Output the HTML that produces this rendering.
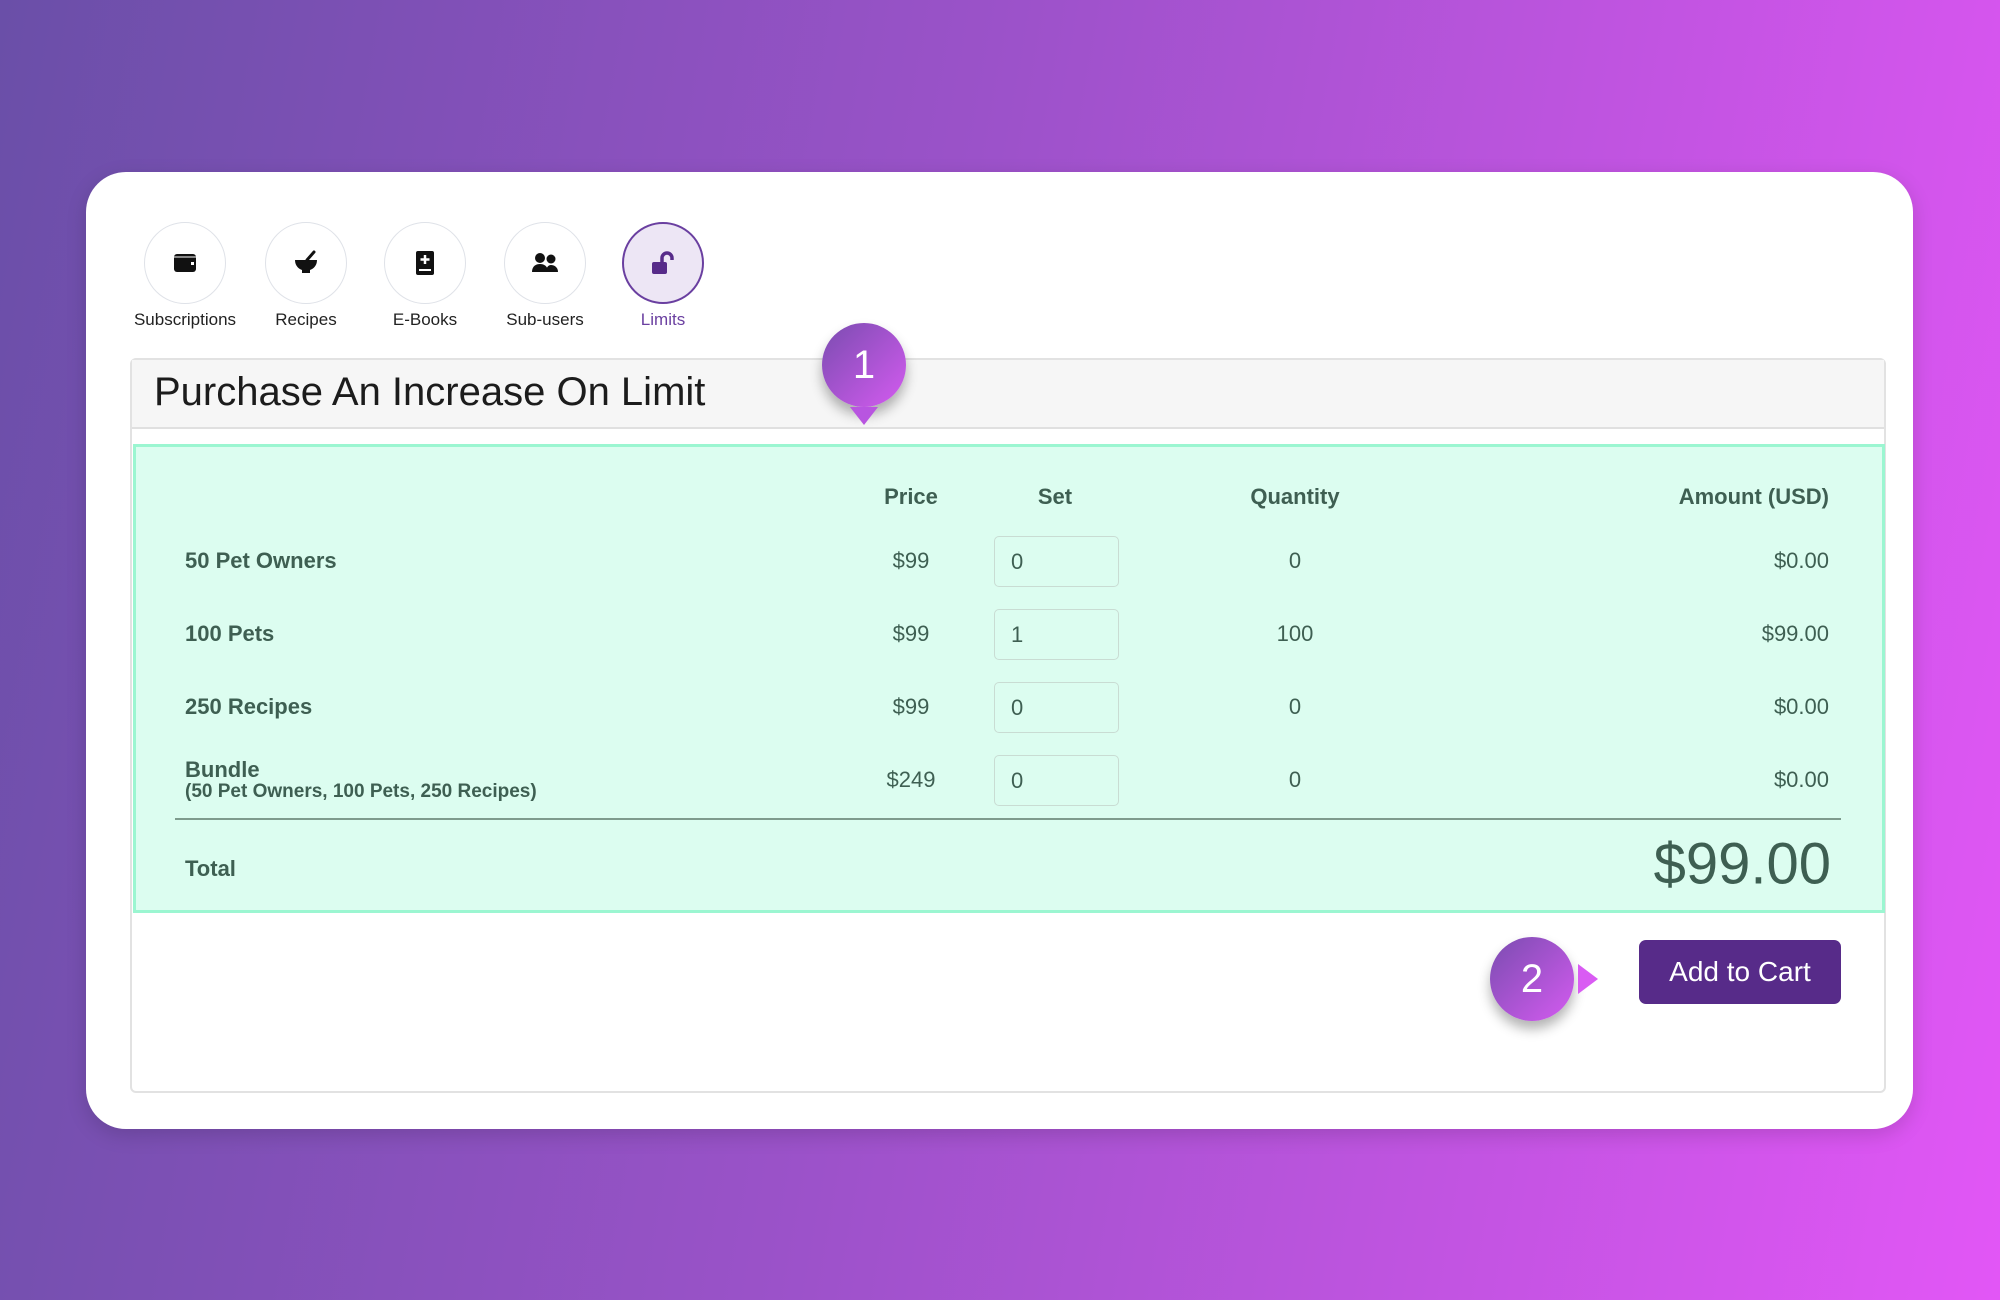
<!DOCTYPE html>
<html><head><meta charset="utf-8"><style>
*{margin:0;padding:0;box-sizing:border-box}
body{width:2000px;height:1300px;overflow:hidden;background:linear-gradient(100deg,#6a4fa8 0%,#9b52c9 45%,#e256f6 100%);font-family:"Liberation Sans",sans-serif;position:relative}
.card{position:absolute;left:86px;top:172px;width:1827px;height:957px;background:#fff;border-radius:40px;box-shadow:0 6px 20px rgba(0,0,0,.15)}
.ic{position:absolute;width:82px;height:82px;border-radius:50%;border:1.5px solid #dfe2e8;background:#fff;display:flex;align-items:center;justify-content:center}
.ic.act{background:#ede6f5;border:2px solid #6a3fa0}
.lbl{position:absolute;top:310px;font-size:17px;color:#222;width:140px;text-align:center}
.panel{position:absolute;left:130px;top:358px;width:1756px;height:735px;border:2px solid #e2e2e2;border-radius:6px;background:#fff}
.head{position:absolute;left:0;top:0;right:0;height:69px;background:#f6f6f6;border-bottom:2px solid #e0e0e0}
.head h1{position:absolute;left:22px;top:10px;font-size:40px;font-weight:normal;color:#1c1c1c}
.green{position:absolute;left:133px;top:444px;width:1752px;height:469px;background:#dcfdf0;border:3px solid #9bf6d1;color:#3e5f52}
.t{position:absolute;font-size:22px;transform:translateY(-50%);white-space:nowrap}
.b{font-weight:bold}
.c{transform:translate(-50%,-50%)}
.r{transform:translate(-100%,-50%)}
.inp{position:absolute;left:994px;width:125px;height:51px;border:1.5px solid #c9dcd3;border-radius:5px;background:#dcfdf0;font-size:22px;padding:12px 16px;color:#3e5f52}
.badge{position:absolute;width:84px;height:84px;border-radius:50%;background:linear-gradient(135deg,#7a4cb0,#d45bf0);color:#fff;font-size:40px;display:flex;align-items:center;justify-content:center;box-shadow:0 8px 12px rgba(0,0,0,.3)}
.btn{position:absolute;left:1639px;top:940px;width:202px;height:64px;background:#572b89;border-radius:7px;color:#fff;font-size:28px;display:flex;align-items:center;justify-content:center}
</style></head><body>
<div class="card"></div>
<div class="ic" style="left:144px;top:222px"><svg width="24" height="22" viewBox="0 0 24 22"><rect x="1" y="2" width="22" height="18" rx="3" fill="#111"/><rect x="1" y="4" width="22" height="2" fill="#fff" opacity=".5"/><rect x="18" y="10" width="3" height="3" fill="#fff"/></svg></div>
<div class="ic" style="left:265px;top:222px"><svg width="26" height="26" viewBox="0 0 26 26"><path d="M2 10h22c0 6-4 9-7 10v3H9v-3c-3-1-7-4-7-10z" fill="#111"/><path d="M14 10l7-8" stroke="#111" stroke-width="3" stroke-linecap="round"/></svg></div>
<div class="ic" style="left:384px;top:222px"><svg width="20" height="26" viewBox="0 0 20 26"><rect x="1" y="1" width="18" height="24" rx="2" fill="#111"/><path d="M10 5v9M5.5 9.5h9" stroke="#fff" stroke-width="2.5"/><path d="M4 20h12" stroke="#fff" stroke-width="2"/></svg></div>
<div class="ic" style="left:504px;top:222px"><svg width="28" height="22" viewBox="0 0 28 22"><circle cx="9" cy="6" r="5" fill="#111"/><circle cx="20" cy="7" r="4.5" fill="#111"/><path d="M1 20c0-6 4-8 8-8s8 2 8 8z" fill="#111"/><path d="M15 20c0-4 2-7 5-7s7 2 7 7z" fill="#111"/></svg></div>
<div class="ic act" style="left:622px;top:222px"><svg width="28" height="28" viewBox="0 0 28 28"><rect x="3" y="13" width="15" height="12" rx="2" fill="#572b89"/><path d="M13 13V9a5 5 0 0 1 10 0v2" stroke="#572b89" stroke-width="3.5" fill="none"/></svg></div>
<div class="lbl" style="left:115px">Subscriptions</div>
<div class="lbl" style="left:236px">Recipes</div>
<div class="lbl" style="left:355px">E-Books</div>
<div class="lbl" style="left:475px">Sub-users</div>
<div class="lbl" style="left:593px;color:#6a3fa0">Limits</div>
<div class="panel"><div class="head"><h1>Purchase An Increase On Limit</h1></div></div>
<div class="green"></div>
<div style="position:absolute;inset:0;color:#3e5f52">
<div class="t b c" style="left:911px;top:497px">Price</div>
<div class="t b c" style="left:1055px;top:497px">Set</div>
<div class="t b c" style="left:1295px;top:497px">Quantity</div>
<div class="t b r" style="left:1829px;top:497px">Amount (USD)</div>

<div class="t b" style="left:185px;top:561px">50 Pet Owners</div>
<div class="t c" style="left:911px;top:561px">$99</div>
<div class="inp" style="top:536px">0</div>
<div class="t c" style="left:1295px;top:561px">0</div>
<div class="t r" style="left:1829px;top:561px">$0.00</div>

<div class="t b" style="left:185px;top:634px">100 Pets</div>
<div class="t c" style="left:911px;top:634px">$99</div>
<div class="inp" style="top:609px">1</div>
<div class="t c" style="left:1295px;top:634px">100</div>
<div class="t r" style="left:1829px;top:634px">$99.00</div>

<div class="t b" style="left:185px;top:707px">250 Recipes</div>
<div class="t c" style="left:911px;top:707px">$99</div>
<div class="inp" style="top:682px">0</div>
<div class="t c" style="left:1295px;top:707px">0</div>
<div class="t r" style="left:1829px;top:707px">$0.00</div>

<div class="t b" style="left:185px;top:770px">Bundle</div>
<div class="t b" style="left:185px;top:792px;font-size:19px">(50 Pet Owners, 100 Pets, 250 Recipes)</div>
<div class="t c" style="left:911px;top:780px">$249</div>
<div class="inp" style="top:755px">0</div>
<div class="t c" style="left:1295px;top:780px">0</div>
<div class="t r" style="left:1829px;top:780px">$0.00</div>

<div style="position:absolute;left:175px;top:818px;width:1666px;height:2px;background:#7e9b8d"></div>
<div class="t b" style="left:185px;top:869px">Total</div>
<div class="t r" style="left:1831px;top:864px;font-size:58px">$99.00</div>
</div>
<div class="badge" style="left:822px;top:323px">1</div>
<div style="position:absolute;left:850px;top:407px;width:0;height:0;border-left:14px solid transparent;border-right:14px solid transparent;border-top:18px solid #b855e0"></div>
<div class="badge" style="left:1490px;top:937px">2</div>
<div style="position:absolute;left:1578px;top:964px;width:0;height:0;border-top:15px solid transparent;border-bottom:15px solid transparent;border-left:20px solid #d95bf3"></div>
<div class="btn">Add to Cart</div>
</body></html>
